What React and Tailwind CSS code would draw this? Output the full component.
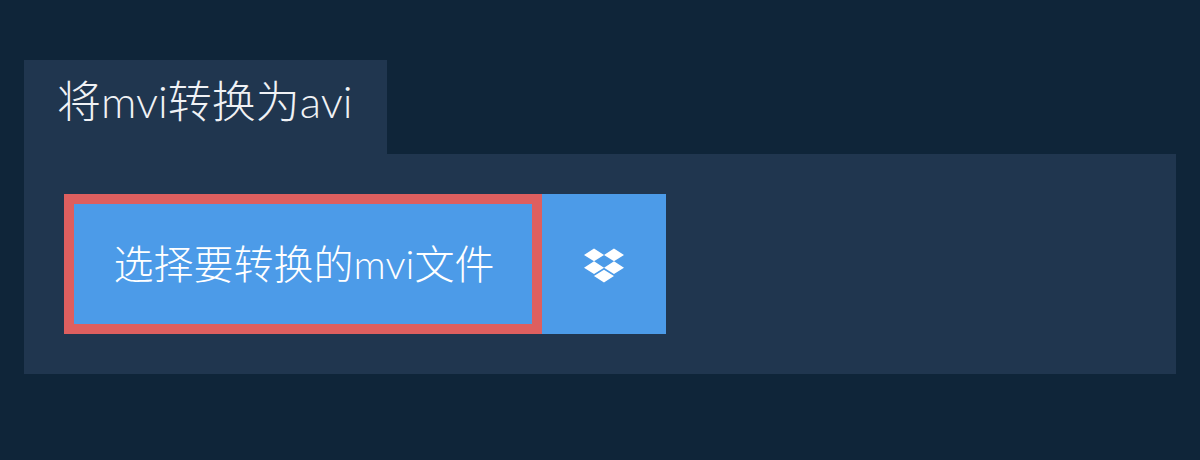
const DropboxIcon = () => (
  <svg viewBox="0 0 528 512" className="w-10 h-[39px] mt-[2px] fill-white">
    <path d="M264.4 116.3l-132 84.3 132 84.3-132 84.3L0 284.1l132.3-84.3L0 116.3 132.3 32l132.1 84.3zM131.6 395.7l132-84.3 132 84.3-132 84.3-132-84.3zm132.8-111.6l132-84.3-132-83.6L395.7 32 528 116.3l-132.3 84.3L528 284.8l-132.3 84.3-131.3-85z" />
  </svg>
);

export default function App() {
  return (
    <div className="h-[460px] bg-[#0f2539] pt-[60px] px-6 font-['Lato','Noto_Sans_CJK_SC',sans-serif] font-light">
      <div className="w-[363px] h-[94px] bg-[#20364f] pl-[33px] pt-3 text-[44px] leading-[58px] text-[#f0f2f5] whitespace-nowrap">
        将mvi转换为avi
      </div>
      <div className="h-[220px] bg-[#20364f] p-10 flex">
        <button className="h-[140px] w-[478px] pl-[2px] border-[10px] border-[#de5f5f] bg-[#4c9be8] text-white text-[40px] flex items-center justify-center">
          选择要转换的mvi文件
        </button>
        <div className="h-[140px] w-[124px] bg-[#4c9be8] flex items-center justify-center">
          <DropboxIcon />
        </div>
      </div>
    </div>
  );
}
